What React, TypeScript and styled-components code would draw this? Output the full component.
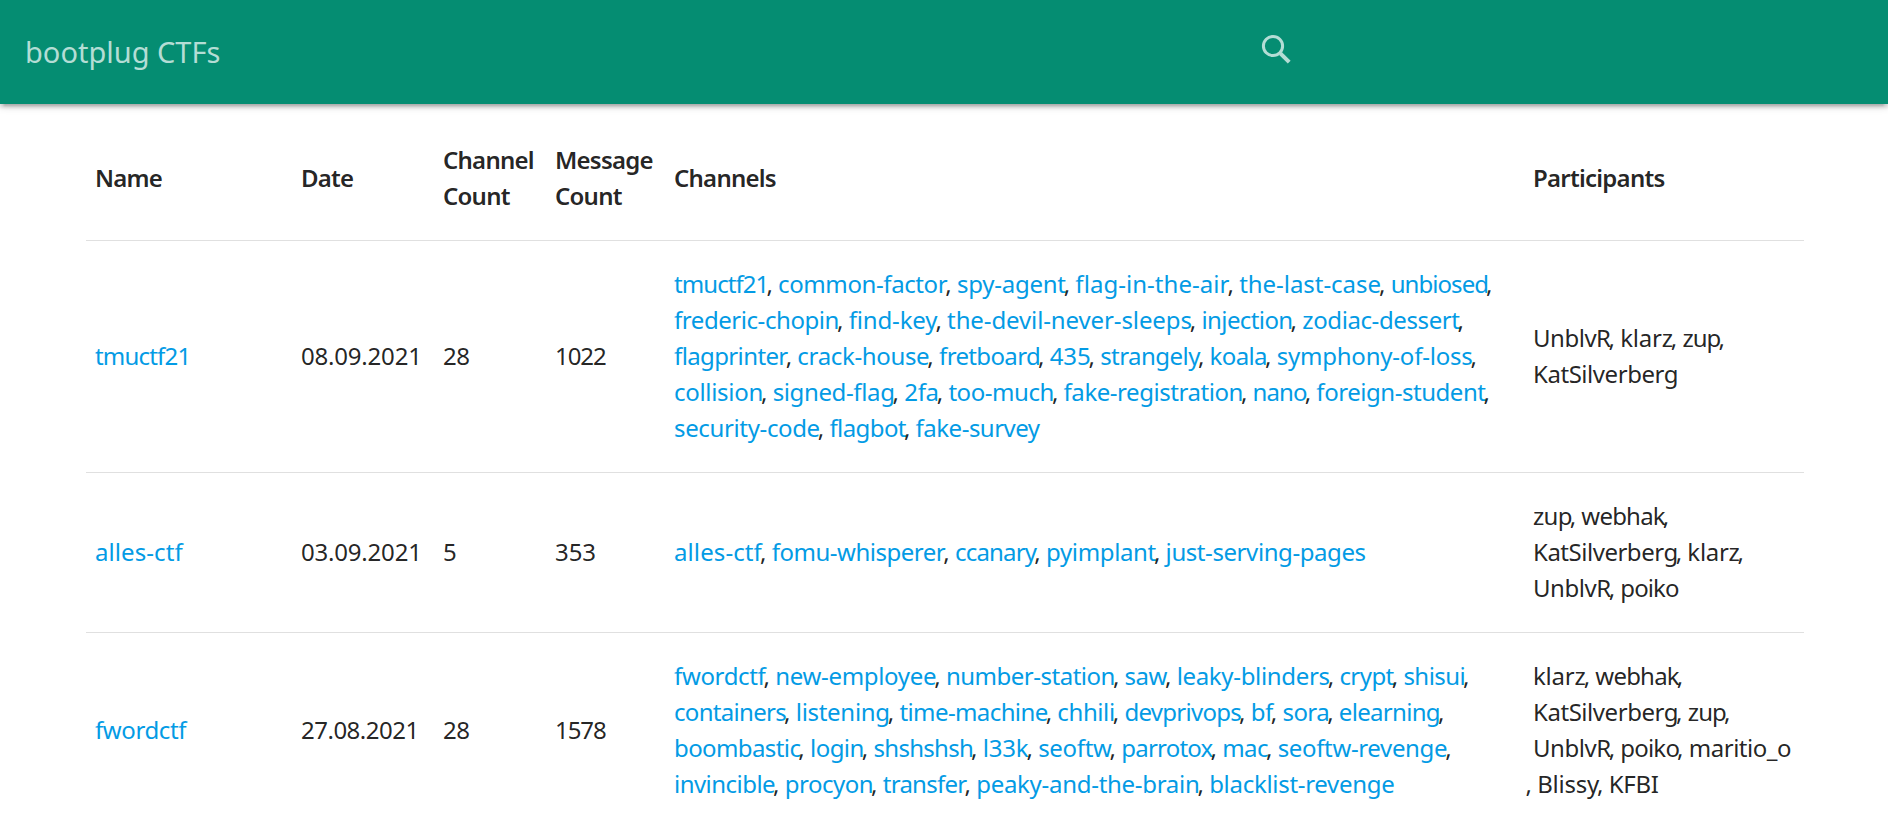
import React, { Fragment } from "react";
import styled, { createGlobalStyle } from "styled-components";

const GlobalStyle = createGlobalStyle`
  *, *::before, *::after {
    box-sizing: border-box;
  }
  body {
    margin: 0;
    background: #fff;
    color: rgba(0, 0, 0, 0.87);
    font-family: "Noto Sans", "Open Sans", sans-serif;
    font-size: 24px;
    line-height: 36.15px;
  }
`;

const Page = styled.div`
  display: flex;
  flex-direction: column;
  height: 100vh;
  overflow: hidden;
`;

const NavBar = styled.nav`
  flex: none;
  display: flex;
  justify-content: space-between;
  height: 104px;
  padding-left: 25px;
  background: #058d72;
  color: #b4ddd5;
  box-shadow:
    0 3.6px 3.6px 0 rgba(0, 0, 0, 0.14),
    0 5.4px 1.8px -3.6px rgba(0, 0, 0, 0.12),
    0 1.8px 9px 0 rgba(0, 0, 0, 0.2);
`;

const Brand = styled.a`
  font-size: 29px;
  line-height: 103px;
  color: inherit;
  text-decoration: none;
  white-space: nowrap;
`;

const SearchForm = styled.form`
  width: 628px;
  padding-top: 32px;
`;

const SearchIcon = styled.svg`
  display: block;
  width: 34px;
  height: 34px;
`;

const Content = styled.main`
  padding: 12px 84px 0 86px;
`;

const Table = styled.table`
  width: 1718px;
  table-layout: fixed;
  border-collapse: collapse;
  text-align: left;
`;

const Column = styled.col<{ $width: number }>`
  width: ${(p) => p.$width}px;
`;

const Row = styled.tr<{ $height: number }>`
  height: ${(p) => p.$height}px;
  border-bottom: 1px solid #e0e0e0;
`;

const Cell = styled.td`
  padding: 0 0 0 9px;
  vertical-align: middle;
  white-space: nowrap;
`;

const HeadCell = styled(Cell).attrs({ as: "th" })`
  padding-top: 1px;
  font-weight: 600;
  letter-spacing: -0.75px;
`;

const Line = styled.div<{ $hang?: boolean }>`
  height: 36.15px;
  margin-left: ${(p) => (p.$hang ? "-5.5px" : "0")};
`;

const Word = styled.span<{ $track: number }>`
  letter-spacing: ${(p) => p.$track}px;
`;

const Link = styled(Word).attrs({ as: "a" })`
  color: #039be5;
  text-decoration: none;
`;

const Separator = styled.span`
  margin-left: -2px;
  margin-right: -1px;
`;

type Token = [text: string, track: number];

interface Ctf {
  name: Token;
  date: Token;
  channelCount: Token;
  messageCount: Token;
  channels: Token[][];
  participants: Token[][];
  height: number;
}

const columns = [206, 142, 112, 119, 859, 280];

const headings = [
  ["Name"],
  ["Date"],
  ["Channel", "Count"],
  ["Message", "Count"],
  ["Channels"],
  ["Participants"],
];

const ctfs: Ctf[] = [
  {
    name: ["tmuctf21", -0.8],
    date: ["08.09.2021", -0.2],
    channelCount: ["28", -0.53],
    messageCount: ["1022", -1.06],
    height: 232,
    channels: [
      [["tmuctf21", -0.93], ["common-factor", -0.4], ["spy-agent", -0.25], ["flag-in-the-air", 0.04], ["the-last-case", -0.04], ["unbiosed", -0.94]],
      [["frederic-chopin", -0.44], ["find-key", -0.14], ["the-devil-never-sleeps", -0.11], ["injection", -0.6], ["zodiac-dessert", -0.4]],
      [["flagprinter", -0.62], ["crack-house", -0.34], ["fretboard", -0.64], ["435", -0.18], ["strangely", -0.54], ["koala", -0.62], ["symphony-of-loss", -0.21]],
      [["collision", -0.3], ["signed-flag", -0.37], ["2fa", -0.33], ["too-much", -0.45], ["fake-registration", -0.45], ["nano", -0.9], ["foreign-student", -0.46]],
      [["security-code", -0.36], ["flagbot", -0.6], ["fake-survey", -0.5]],
    ],
    participants: [
      [["UnblvR", -0.48], ["klarz", -0.24], ["zup", -0.96]],
      [["KatSilverberg", -0.45]],
    ],
  },
  {
    name: ["alles-ctf", 0.08],
    date: ["03.09.2021", -0.2],
    channelCount: ["5", 0],
    messageCount: ["353", -0.1],
    height: 160,
    channels: [
      [["alles-ctf", 0.1], ["fomu-whisperer", -0.48], ["ccanary", -0.8], ["pyimplant", -0.35], ["just-serving-pages", -0.42]],
    ],
    participants: [
      [["zup", -0.74], ["webhak", -0.8]],
      [["KatSilverberg", -0.48], ["klarz", -0.3]],
      [["UnblvR", -0.47], ["poiko", -0.9]],
    ],
  },
  {
    name: ["fwordctf", -0.4],
    date: ["27.08.2021", -0.5],
    channelCount: ["28", -0.53],
    messageCount: ["1578", -1.06],
    height: 196,
    channels: [
      [["fwordctf", -0.35], ["new-employee", -0.31], ["number-station", -0.49], ["saw", -0.49], ["leaky-blinders", -0.33], ["crypt", -0.55], ["shisui", -0.57]],
      [["containers", -0.69], ["listening", -0.3], ["time-machine", -0.6], ["chhili", -0.4], ["devprivops", -0.72], ["bf", -0.48], ["sora", -0.56], ["elearning", -0.69]],
      [["boombastic", -0.6], ["login", -0.55], ["shshshsh", -0.71], ["l33k", -0.2], ["seoftw", -0.33], ["parrotox", -0.77], ["mac", -0.56], ["seoftw-revenge", -0.35]],
      [["invincible", -0.54], ["procyon", -0.5], ["transfer", -0.73], ["peaky-and-the-brain", -0.29], ["blacklist-revenge", -0.3]],
    ],
    participants: [
      [["klarz", -0.2], ["webhak", -0.8]],
      [["KatSilverberg", -0.45], ["zup", -0.9]],
      [["UnblvR", -0.47], ["poiko", -0.81], ["maritio_o", -0.48]],
      [["", 0], ["Blissy", -0.23], ["KFBI", -0.3]],
    ],
  },
];

function TokenLines({ lines, linked }: { lines: Token[][]; linked?: boolean }) {
  const Item = linked ? Link : Word;
  return (
    <>
      {lines.map((line, i) => (
        <Line key={i} $hang={line[0][0] === ""}>
          {line.map(([text, track], j) => (
            <Fragment key={j}>
              {text && <Item $track={track}>{text}</Item>}
              {(j < line.length - 1 || i < lines.length - 1) &&
                !(j === line.length - 1 && lines[i + 1]?.[0][0] === "") && (
                  <Separator>{", "}</Separator>
                )}
            </Fragment>
          ))}
        </Line>
      ))}
    </>
  );
}

export default function App() {
  return (
    <Page>
      <GlobalStyle />
      <NavBar>
        <Brand>bootplug CTFs</Brand>
        <SearchForm role="search">
          <SearchIcon viewBox="0 0 34 34" fill="none" stroke="currentColor" aria-label="Search">
            <circle cx="13" cy="14" r="9.6" strokeWidth="3" />
            <path d="M19.2 20.2 L21 22" strokeWidth="2.4" />
            <path d="M20.6 21.6 L29.2 30.2" strokeWidth="4" />
          </SearchIcon>
        </SearchForm>
      </NavBar>
      <Content>
        <Table>
          <colgroup>
            {columns.map((width, i) => (
              <Column key={i} $width={width} />
            ))}
          </colgroup>
          <thead>
            <Row $height={124}>
              {headings.map((lines, i) => (
                <HeadCell key={i}>
                  {lines.map((line) => (
                    <Line key={line}>{line}</Line>
                  ))}
                </HeadCell>
              ))}
            </Row>
          </thead>
          <tbody>
            {ctfs.map((ctf) => (
              <Row key={ctf.name[0]} $height={ctf.height}>
                <Cell>
                  <Link $track={ctf.name[1]}>{ctf.name[0]}</Link>
                </Cell>
                {[ctf.date, ctf.channelCount, ctf.messageCount].map(([text, track], i) => (
                  <Cell key={i}>
                    <Word $track={track}>{text}</Word>
                  </Cell>
                ))}
                <Cell>
                  <TokenLines lines={ctf.channels} linked />
                </Cell>
                <Cell>
                  <TokenLines lines={ctf.participants} />
                </Cell>
              </Row>
            ))}
          </tbody>
        </Table>
      </Content>
    </Page>
  );
}
